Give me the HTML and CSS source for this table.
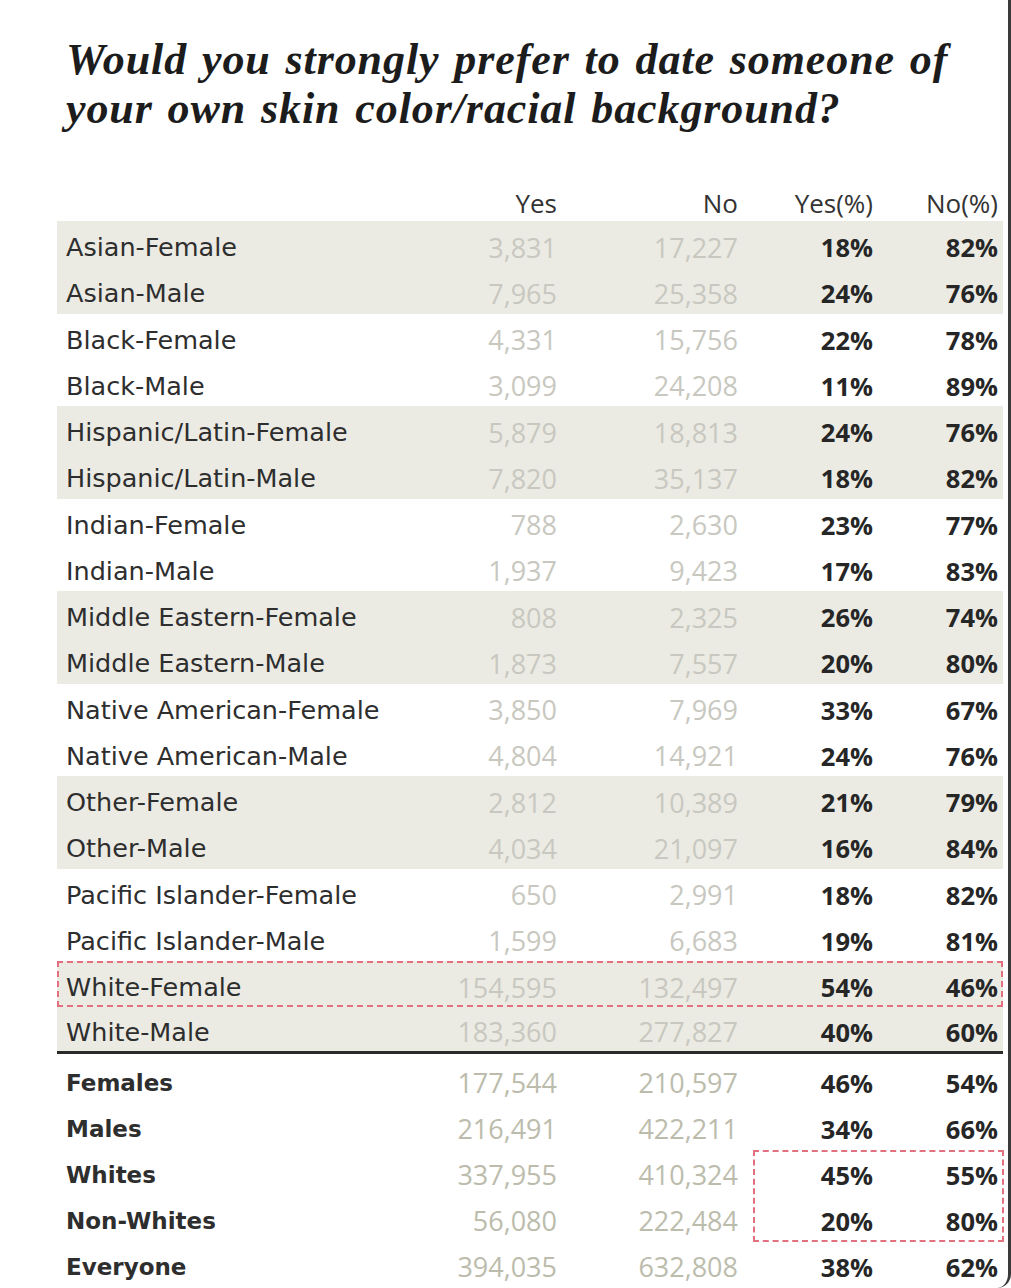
FILE: index.html
```html
<!DOCTYPE html>
<html>
<head>
<meta charset="utf-8">
<link rel="stylesheet" href="styles.css">
</head>
<body>
<div class="page">
  <h1 class="title">Would you strongly prefer to date someone of<br>your own skin color/racial background?</h1>
  <div class="table">
    <div class="row head">
      <span class="lbl"></span><span class="num">Yes</span><span class="num">No</span><span class="num">Yes(%)</span><span class="num">No(%)</span>
    </div>
    <div class="row shade"><span class="lbl">Asian-Female</span><span class="cnt">3,831</span><span class="cnt">17,227</span><span class="pct">18%</span><span class="pct">82%</span></div>
    <div class="row shade"><span class="lbl">Asian-Male</span><span class="cnt">7,965</span><span class="cnt">25,358</span><span class="pct">24%</span><span class="pct">76%</span></div>
    <div class="row"><span class="lbl">Black-Female</span><span class="cnt">4,331</span><span class="cnt">15,756</span><span class="pct">22%</span><span class="pct">78%</span></div>
    <div class="row"><span class="lbl">Black-Male</span><span class="cnt">3,099</span><span class="cnt">24,208</span><span class="pct">11%</span><span class="pct">89%</span></div>
    <div class="row shade"><span class="lbl">Hispanic/Latin-Female</span><span class="cnt">5,879</span><span class="cnt">18,813</span><span class="pct">24%</span><span class="pct">76%</span></div>
    <div class="row shade"><span class="lbl">Hispanic/Latin-Male</span><span class="cnt">7,820</span><span class="cnt">35,137</span><span class="pct">18%</span><span class="pct">82%</span></div>
    <div class="row"><span class="lbl">Indian-Female</span><span class="cnt">788</span><span class="cnt">2,630</span><span class="pct">23%</span><span class="pct">77%</span></div>
    <div class="row"><span class="lbl">Indian-Male</span><span class="cnt">1,937</span><span class="cnt">9,423</span><span class="pct">17%</span><span class="pct">83%</span></div>
    <div class="row shade"><span class="lbl">Middle Eastern-Female</span><span class="cnt">808</span><span class="cnt">2,325</span><span class="pct">26%</span><span class="pct">74%</span></div>
    <div class="row shade"><span class="lbl">Middle Eastern-Male</span><span class="cnt">1,873</span><span class="cnt">7,557</span><span class="pct">20%</span><span class="pct">80%</span></div>
    <div class="row"><span class="lbl">Native American-Female</span><span class="cnt">3,850</span><span class="cnt">7,969</span><span class="pct">33%</span><span class="pct">67%</span></div>
    <div class="row"><span class="lbl">Native American-Male</span><span class="cnt">4,804</span><span class="cnt">14,921</span><span class="pct">24%</span><span class="pct">76%</span></div>
    <div class="row shade"><span class="lbl">Other-Female</span><span class="cnt">2,812</span><span class="cnt">10,389</span><span class="pct">21%</span><span class="pct">79%</span></div>
    <div class="row shade"><span class="lbl">Other-Male</span><span class="cnt">4,034</span><span class="cnt">21,097</span><span class="pct">16%</span><span class="pct">84%</span></div>
    <div class="row"><span class="lbl">Pacific Islander-Female</span><span class="cnt">650</span><span class="cnt">2,991</span><span class="pct">18%</span><span class="pct">82%</span></div>
    <div class="row"><span class="lbl">Pacific Islander-Male</span><span class="cnt">1,599</span><span class="cnt">6,683</span><span class="pct">19%</span><span class="pct">81%</span></div>
    <div class="row shade marked"><span class="lbl">White-Female</span><span class="cnt">154,595</span><span class="cnt">132,497</span><span class="pct">54%</span><span class="pct">46%</span></div>
    <div class="row shade last"><span class="lbl">White-Male</span><span class="cnt">183,360</span><span class="cnt">277,827</span><span class="pct">40%</span><span class="pct">60%</span></div>
    <div class="summary">
      <div class="row sum"><span class="lbl">Females</span><span class="cnt">177,544</span><span class="cnt">210,597</span><span class="pct">46%</span><span class="pct">54%</span></div>
      <div class="row sum"><span class="lbl">Males</span><span class="cnt">216,491</span><span class="cnt">422,211</span><span class="pct">34%</span><span class="pct">66%</span></div>
      <div class="row sum"><span class="lbl">Whites</span><span class="cnt">337,955</span><span class="cnt">410,324</span><span class="pct">45%</span><span class="pct">55%</span></div>
      <div class="row sum"><span class="lbl">Non-Whites</span><span class="cnt">56,080</span><span class="cnt">222,484</span><span class="pct">20%</span><span class="pct">80%</span></div>
      <div class="row sum"><span class="lbl">Everyone</span><span class="cnt">394,035</span><span class="cnt">632,808</span><span class="pct">38%</span><span class="pct">62%</span></div>
      <div class="box"></div>
    </div>
  </div>
</div>
</body>
</html>
```
FILE: styles.css
```css
html, body {
  margin: 0;
  padding: 0;
  background: #ffffff;
}
.page {
  box-sizing: border-box;
  width: 1011px;
  height: 1288px;
  overflow: hidden;
  border-right: 3px solid #3a3a3a;
  border-bottom-right-radius: 14px;
  padding: 35px 0 0 57px;
}
.title {
  margin: 0 0 0 9px;
  font-family: "Liberation Serif", "Times New Roman", serif;
  font-style: italic;
  font-weight: bold;
  font-size: 44px;
  line-height: 49px;
  color: #1c1c1c;
  letter-spacing: 0.9px;
  word-spacing: 3px;
}
.table {
  margin-top: 47px;
  width: 946px;
}
.row {
  display: grid;
  grid-template-columns: 400px 100px 181px 135px 125px;
  padding-right: 5px;
  height: 46.25px;
  align-items: center;
  font-family: "DejaVu Sans", Verdana, sans-serif;
  font-size: 25.5px;
  color: #2e2e2e;
  box-sizing: border-box;
  padding-top: 6px;
}
.row.head {
  height: 41px;
  padding-top: 0;
  font-family: "Open Sans", sans-serif;
  font-size: 26px;
  align-items: end;
  color: #333333;
}
.row.head .num {
  text-align: right;
  line-height: 30px;
  margin-bottom: 3px;
}
.shade {
  background: #ebebe4;
}
.lbl {
  padding-left: 9px;
  white-space: nowrap;
}
.cnt {
  text-align: right;
  font-family: "Open Sans", sans-serif;
  font-size: 27px;
  color: #c8c8c0;
}
.pct {
  text-align: right;
  font-family: "Open Sans", sans-serif;
  font-weight: bold;
  font-size: 25.5px;
  color: #262626;
}
.marked {
  outline: 2px dashed #e2707e;
  outline-offset: -2px;
}
.last {
  border-bottom: 3px solid #2a2a2a;
}
.summary {
  position: relative;
  padding-top: 4px;
}
.row.sum {
  height: 46px;
  padding-top: 4px;
}
.sum .lbl {
  font-weight: bold;
  font-size: 23px;
}
.sum .cnt {
  color: #bcbcac;
}
.box {
  position: absolute;
  left: 696px;
  top: 96px;
  width: 251px;
  height: 92px;
  box-sizing: border-box;
  border: 2px dashed #e2707e;
}
```
